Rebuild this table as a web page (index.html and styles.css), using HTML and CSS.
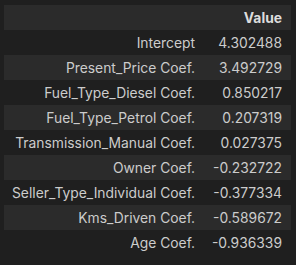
FILE: index.html
```html
<!DOCTYPE html>
<html>
<head>
<meta charset="utf-8">
<link rel="stylesheet" href="styles.css">
</head>
<body>
<table class="df">
  <colgroup><col class="c-label"><col class="c-value"></colgroup>
  <thead>
    <tr><th class="blank"></th><th class="col">Value</th></tr>
  </thead>
  <tbody>
    <tr><th>Intercept</th><td>4.302488</td></tr>
    <tr><th>Present_Price Coef.</th><td>3.492729</td></tr>
    <tr><th>Fuel_Type_Diesel Coef.</th><td>0.850217</td></tr>
    <tr><th>Fuel_Type_Petrol Coef.</th><td>0.207319</td></tr>
    <tr><th>Transmission_Manual Coef.</th><td>0.027375</td></tr>
    <tr><th>Owner Coef.</th><td>-0.232722</td></tr>
    <tr><th>Seller_Type_Individual Coef.</th><td>-0.377334</td></tr>
    <tr><th>Kms_Driven Coef.</th><td>-0.589672</td></tr>
    <tr><th>Age Coef.</th><td>-0.936339</td></tr>
  </tbody>
</table>
</body>
</html>
```
FILE: styles.css
```css
html, body {
  margin: 0;
  padding: 0;
  background: #1f1f1f;
}
body {
  padding: 5px 5px 0 4px;
  font-family: Inter, "Noto Sans", sans-serif;
  font-size: 13.85px;
  color: #cccccc;
}
.df {
  border-collapse: collapse;
  width: 287px;
  table-layout: fixed;
}
.c-label { width: 200px; }
.c-value { width: 87px; }
.df th, .df td {
  height: 25px;
  padding: 0 9px 0 0;
  text-align: right;
  font-weight: normal;
  white-space: nowrap;
  vertical-align: middle;
  line-height: 16px;
}
.df thead tr {
  background: #2b2b2b;
}
.df thead th.col {
  font-weight: bold;
  color: #dddddd;
}
.df tbody tr:nth-child(even) {
  background: #2b2b2b;
}
```
